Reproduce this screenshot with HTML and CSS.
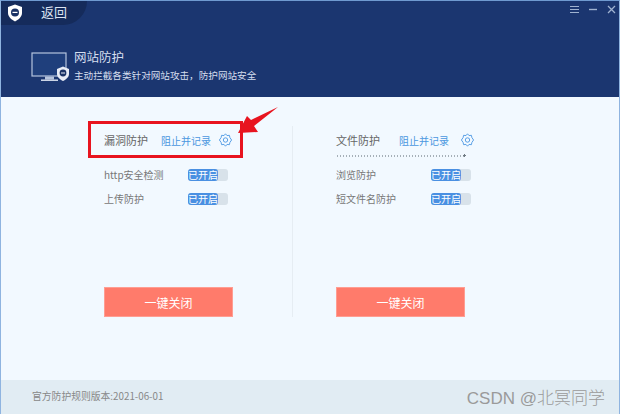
FILE: index.html
```html
<!DOCTYPE html>
<html lang="zh-CN">
<head>
    <meta charset="UTF-8">
    <meta name="viewport" content="width=device-width, initial-scale=1.0">
    <title>网站防护</title>
    <link rel="stylesheet" href="styles.css">
</head>
<body>
    <div class="window">
        <header class="header">
            <div class="top-bar">
                <div class="back-tab">
                    <svg class="logo" width="16" height="18" viewBox="0 0 16 18">
                        <path d="M8 0.5 L15 3 V9 C15 13 11 16 8 17.5 C5 16 1 13 1 9 V3 Z" fill="#ffffff"/>
                        <circle cx="8" cy="8.5" r="4" fill="#1b3366"/>
                        <rect x="5.5" y="7.8" width="5" height="1.2" fill="#ffffff"/>
                    </svg>
                    <span class="back-text">返回</span>
                </div>
                <div class="window-controls">
                    <svg class="controls-icon" width="50" height="12" viewBox="0 0 50 12">
                        <path d="M1 2.5H10M1 5.5H10M1 8.5H10" stroke="#9fb2d0" stroke-width="1.2"/>
                        <path d="M20 5.5H28" stroke="#9fb2d0" stroke-width="1.4"/>
                        <path d="M39 2L46 9M46 2L39 9" stroke="#9fb2d0" stroke-width="1.3"/>
                    </svg>
                </div>
            </div>
            <div class="intro">
                <svg class="monitor" width="38" height="32" viewBox="0 0 38 32">
                    <rect x="1" y="1" width="34" height="23" fill="#1f3f7c" stroke="#b5c4de" stroke-width="1.2"/>
                    <rect x="14" y="24.5" width="9" height="3" fill="#b5c4de"/>
                    <rect x="10" y="27.5" width="17" height="1.4" fill="#dfe6f2"/>
                    <path d="M32 14.5 L38 17 V22 C38 25 35 27.5 32 29 C29 27.5 26 25 26 22 V17 Z" fill="#e8ecf6"/>
                    <circle cx="32" cy="21" r="3.4" fill="#1b3366"/>
                    <rect x="30" y="20.5" width="4" height="1" fill="#e8ecf6"/>
                </svg>
                <div class="intro-text">
                    <h1 class="intro-title">网站防护</h1>
                    <p class="intro-desc">主动拦截各类针对网站攻击，防护网站安全</p>
                </div>
            </div>
        </header>

        <main class="content">
            <section class="column column-left">
                <div class="column-head">
                    <span class="column-title">漏洞防护</span>
                    <a class="column-mode">阻止并记录</a>
                    <svg class="gear" width="13" height="14" viewBox="0 0 13 14">
                        <path d="M6.5 0.8 L8 2.6 L10.4 2.3 L10.9 4.6 L12.6 7 L10.9 9.4 L10.4 11.7 L8 11.4 L6.5 13.2 L5 11.4 L2.6 11.7 L2.1 9.4 L0.4 7 L2.1 4.6 L2.6 2.3 L5 2.6 Z" fill="none" stroke="#5aa0e6" stroke-width="1"/>
                        <circle cx="6.5" cy="7" r="2.2" fill="none" stroke="#5aa0e6" stroke-width="1"/>
                    </svg>
                </div>
                <div class="rows">
                    <div class="row">
                        <span class="row-name">http安全检测</span>
                        <span class="toggle"><span class="toggle-on">已开启</span></span>
                    </div>
                    <div class="row">
                        <span class="row-name">上传防护</span>
                        <span class="toggle"><span class="toggle-on">已开启</span></span>
                    </div>
                </div>
                <button class="close-button">一键关闭</button>
            </section>
            <section class="column column-right">
                <div class="column-head column-head-dotted">
                    <span class="column-title">文件防护</span>
                    <a class="column-mode">阻止并记录</a>
                    <svg class="gear" width="13" height="14" viewBox="0 0 13 14">
                        <path d="M6.5 0.8 L8 2.6 L10.4 2.3 L10.9 4.6 L12.6 7 L10.9 9.4 L10.4 11.7 L8 11.4 L6.5 13.2 L5 11.4 L2.6 11.7 L2.1 9.4 L0.4 7 L2.1 4.6 L2.6 2.3 L5 2.6 Z" fill="none" stroke="#5aa0e6" stroke-width="1"/>
                        <circle cx="6.5" cy="7" r="2.2" fill="none" stroke="#5aa0e6" stroke-width="1"/>
                    </svg>
                </div>
                <div class="rows">
                    <div class="row">
                        <span class="row-name">浏览防护</span>
                        <span class="toggle"><span class="toggle-on">已开启</span></span>
                    </div>
                    <div class="row">
                        <span class="row-name">短文件名防护</span>
                        <span class="toggle"><span class="toggle-on">已开启</span></span>
                    </div>
                </div>
                <button class="close-button">一键关闭</button>
            </section>

            <div class="red-box"></div>
            <svg class="red-arrow" width="44" height="32" viewBox="0 0 44 32">
                <path d="M2 30 L11 13 L15 17 L42 4 L18 23 L22 29 Z" fill="#e8141f"/>
            </svg>
        </main>

        <footer class="footer">
            <span class="rule-version">官方防护规则版本:2021-06-01</span>
            <span class="watermark">CSDN @北冥同学</span>
        </footer>
    </div>
</body>
</html>
```
FILE: styles.css
```css
html, body {
    margin: 0;
    padding: 0;
}
body {
    font-family: "Noto Sans CJK SC", "Liberation Sans", sans-serif;
    background-color: #f2f9ff;
}
.window {
    width: 620px;
    height: 414px;
    box-sizing: border-box;
    display: flex;
    flex-direction: column;
    border-left: 1px solid #8fb4e0;
    border-right: 1px solid #8fb4e0;
    border-top: 1px solid #6f9ad0;
}
.header {
    height: 96px;
    background-color: #1b3670;
    color: #ffffff;
}
.top-bar {
    display: flex;
    justify-content: space-between;
}
.back-tab {
    width: 86px;
    height: 24px;
    display: flex;
    align-items: center;
    background-color: #152b5b;
    border-bottom-right-radius: 24px;
    padding-left: 6px;
    box-sizing: border-box;
}
.back-text {
    margin-left: 18px;
    font-size: 13px;
    line-height: 20px;
    margin-bottom: 3px;
    color: #dbe3f1;
}
.window-controls {
    padding-top: 3px;
}
.controls-icon {
    display: block;
}
.intro {
    display: flex;
    align-items: flex-start;
    padding: 27px 0 0 30px;
}
.monitor {
    margin-right: 5px;
    flex-shrink: 0;
}
.intro-text {
    margin-top: -3px;
}
.intro-title {
    margin: 0;
    font-size: 12.5px;
    font-weight: normal;
    line-height: 16px;
    color: #d5deee;
}
.intro-desc {
    margin: 3px 0 0;
    font-size: 9.6px;
    line-height: 14px;
    color: #d5deee;
}
.content {
    flex: 1;
    position: relative;
    display: flex;
    padding-top: 29px;
}
.column {
    box-sizing: border-box;
    height: 191px;
    display: flex;
    flex-direction: column;
}
.column-left {
    width: 292px;
    padding-left: 103px;
    border-right: 1px solid #e6edf3;
}
.column-right {
    padding-left: 43px;
}
.column-head {
    width: 130px;
    height: 28px;
    display: flex;
    align-items: center;
    padding-bottom: 3px;
    box-sizing: content-box;
}
.column-head-dotted {
    background-image: radial-gradient(circle, #6f7a82 1.1px, transparent 1.4px), radial-gradient(circle, #a6b0b8 0.6px, transparent 0.8px);
    background-size: 3px 3px, 3px 2px;
    background-position: right bottom, left bottom;
    background-repeat: no-repeat, repeat-x;
}
.column-title {
    flex: none;
    font-size: 11px;
    color: #666666;
    width: 57px;
}
.column-head-dotted .column-title {
    width: 63px;
}
.column-mode {
    flex: none;
    font-size: 10px;
    color: #4a97e0;
    width: 58px;
}
.column-head-dotted .column-mode {
    width: 62px;
}
.gear {
    flex: none;
}
.rows {
    display: flex;
    flex-direction: column;
    gap: 12px;
    margin-top: 12px;
}
.row {
    display: flex;
    align-items: center;
    height: 12px;
}
.row-name {
    width: 84px;
    font-size: 10px;
    line-height: 12px;
    margin-bottom: 1px;
    color: #777777;
}
.column-right .row-name {
    width: 95px;
}
.toggle {
    width: 40px;
    height: 12px;
    background-color: #d8e2ea;
    border-radius: 3px;
    display: block;
}
.toggle-on {
    display: block;
    width: 30px;
    height: 12px;
    background-color: #4a90e2;
    border-radius: 3px;
    color: #ffffff;
    font-size: 10px;
    line-height: 12px;
    text-align: center;
}
.close-button {
    margin-top: auto;
    width: 129px;
    height: 30px;
    border: 1px solid #ff9d92;
    background-color: #ff7b6b;
    color: #ffffff;
    font-family: inherit;
    font-size: 12px;
    padding: 0;
}
.footer {
    height: 34px;
    box-sizing: border-box;
    padding: 0 14px 2px 31px;
    background-color: #e1ecf3;
    display: flex;
    align-items: center;
    justify-content: space-between;
}
.rule-version {
    font-size: 9.8px;
    color: #888888;
}
.watermark {
    font-size: 17px;
    font-weight: 300;
    color: #9a9a9a;
    font-family: "Liberation Sans", "Noto Sans CJK SC", sans-serif;
}
.red-box {
    position: absolute;
    left: 87px;
    top: 24px;
    width: 155px;
    height: 37px;
    box-sizing: border-box;
    border: 3px solid #e8141f;
}
.red-arrow {
    position: absolute;
    left: 235px;
    top: 6px;
}
```
